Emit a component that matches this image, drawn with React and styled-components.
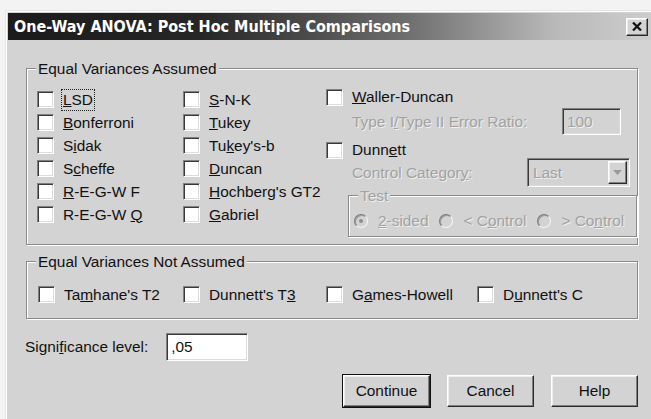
import React from "react";
import styled, { createGlobalStyle, css } from "styled-components";

const GlobalStyle = createGlobalStyle`
  html, body {
    margin: 0;
    padding: 0;
    background: #f3f3f3;
  }
  body {
    font-family: "Liberation Sans", Arial, sans-serif;
  }
`;

const FACE = "#d3d3d3";

const Page = styled.div`
  width: 651px;
  height: 419px;
  overflow: hidden;
  box-sizing: border-box;
  padding: 10px 0 0 5px;
`;

const Window = styled.div`
  height: 430px;
  box-sizing: border-box;
  background: ${FACE};
  border-left: 1px solid #e6e6e6;
  border-top: 1px solid #e6e6e6;
  box-shadow: inset 1px 1px 0 #ffffff;
  padding: 2px 0 0 2px;
  display: flex;
  flex-direction: column;
  font-size: 15.4px;
  color: #111;
`;

const TitleBar = styled.div`
  height: 27px;
  flex: none;
  display: flex;
  align-items: center;
  justify-content: space-between;
  padding: 0 3px 0 6px;
  background: linear-gradient(90deg, #1b1b1b 0%, #262626 30%, #6e6e6e 62%, #b9b9b9 85%, #cdcdcd 100%);
`;

const Title = styled.span`
  font-family: "DejaVu Sans Condensed", "DejaVu Sans", sans-serif;
  font-stretch: condensed;
  font-weight: bold;
  font-size: 16px;
  color: #ffffff;
`;

const raised = css`
  background: ${FACE};
  border-top: 1px solid #ffffff;
  border-left: 1px solid #ffffff;
  border-right: 1px solid #2a2a2a;
  border-bottom: 1px solid #2a2a2a;
  box-shadow: inset -1px -1px 0 #808080, inset 1px 1px 0 #eeeeee;
`;

const sunken = css`
  border-top: 1px solid #808080;
  border-left: 1px solid #808080;
  border-right: 1px solid #ffffff;
  border-bottom: 1px solid #ffffff;
  box-shadow: inset 1px 1px 0 #3a3a3a, inset -1px -1px 0 #dcdcdc;
`;

const CloseButton = styled.div`
  ${raised};
  box-sizing: border-box;
  width: 22px;
  height: 18px;
  display: flex;
  align-items: center;
  justify-content: center;
`;

const Body = styled.div`
  display: flex;
  flex-direction: column;
  padding: 28px 13px 0 18px;
`;

const Group = styled.div`
  border: 1px solid #8a8a8a;
  box-shadow: inset 1px 1px 0 #ffffff, 1px 1px 0 #ffffff;
  margin-top: ${(p) => p.$top || 0}px;
  margin-left: ${(p) => p.$left || 0}px;
  height: ${(p) => p.$height}px;
  box-sizing: border-box;
`;

const Legend = styled.div`
  display: table;
  height: 18px;
  line-height: 18px;
  margin-top: -9px;
  margin-left: ${(p) => p.$indent}px;
  padding: 0 2px;
  background: ${FACE};
  color: ${(p) => (p.$disabled ? "#a2a2a2" : "#111")};
  ${(p) => p.$disabled && "text-shadow: 1px 1px 0 #efefef;"}
`;

const Columns = styled.div`
  display: flex;
  margin-top: 10px;
  padding-left: 10px;
`;

const Column = styled.div`
  display: flex;
  flex-direction: column;
  width: ${(p) => (p.$width ? `${p.$width}px` : "auto")};
  flex: ${(p) => (p.$width ? "none" : "1")};
  margin-top: ${(p) => p.$shift || 0}px;
`;

const Row = styled.div`
  display: flex;
  align-items: center;
  height: ${(p) => p.$h || 23}px;
  margin-top: ${(p) => p.$mt || 0}px;
  padding-left: ${(p) => p.$indent || 0}px;
  justify-content: ${(p) => (p.$spread ? "space-between" : "flex-start")};
  gap: 9px;
  white-space: nowrap;
`;

const Box = styled.span`
  flex: none;
  width: 17px;
  height: 17px;
  box-sizing: border-box;
  background: #ffffff;
  ${sunken};
`;

const Label = styled.span`
  color: ${(p) => (p.$disabled ? "#a2a2a2" : "#111")};
  ${(p) => p.$disabled && "text-shadow: 1px 1px 0 #efefef;"}
  ${(p) =>
    p.$focused &&
    css`
      outline: 1px dotted #222;
      outline-offset: 1px;
    `}
`;

const Radio = styled.span`
  flex: none;
  width: 14px;
  height: 14px;
  box-sizing: border-box;
  border-radius: 50%;
  background: ${FACE};
  border: 1px solid;
  border-color: #7a7a7a #f6f6f6 #f6f6f6 #7a7a7a;
  box-shadow: inset 1px 1px 0 #9a9a9a;
  display: flex;
  align-items: center;
  justify-content: center;
  &::after {
    content: "";
    width: 4px;
    height: 4px;
    border-radius: 50%;
    background: ${(p) => (p.$checked ? "#8e8e8e" : "transparent")};
  }
`;

const RadioRow = styled.div`
  display: flex;
  align-items: center;
  height: 22px;
  margin-top: 5px;
  padding-left: 5px;
  white-space: nowrap;
`;

const RadioItem = styled.div`
  display: flex;
  align-items: center;
  gap: 10px;
  margin-right: 11px;
`;

const Field = styled.div`
  ${sunken};
  box-sizing: border-box;
  width: ${(p) => p.$w}px;
  height: ${(p) => p.$h}px;
  background: ${(p) => (p.$disabled ? FACE : "#ffffff")};
  color: ${(p) => (p.$disabled ? "#a2a2a2" : "#111")};
  ${(p) => p.$disabled && "text-shadow: 1px 1px 0 #efefef;"}
  display: flex;
  align-items: center;
  padding-left: 4px;
  margin-right: ${(p) => p.$mr || 0}px;
`;

const Select = styled.div`
  ${sunken};
  box-sizing: border-box;
  width: 103px;
  height: 29px;
  margin-right: 7px;
  background: ${FACE};
  display: flex;
  align-items: center;
  justify-content: space-between;
  padding: 0 2px 0 5px;
  color: #a2a2a2;
  text-shadow: 1px 1px 0 #efefef;
`;

const SelectArrow = styled.span`
  ${raised};
  box-sizing: border-box;
  width: 19px;
  height: 23px;
  display: flex;
  align-items: center;
  justify-content: center;
`;

const FooterRow = styled.div`
  display: flex;
  align-items: center;
  gap: 18px;
  margin-top: 14px;
  margin-left: -1px;
`;

const ButtonRow = styled.div`
  display: flex;
  justify-content: flex-end;
  gap: 17px;
  margin-top: 14px;
`;

const Button = styled.div`
  ${raised};
  box-sizing: border-box;
  width: 87px;
  height: 32px;
  display: flex;
  align-items: center;
  justify-content: center;
  color: #111;
  ${(p) =>
    p.$default &&
    css`
      outline: 1px solid #111;
    `}
`;

const NotAssumedRow = styled.div`
  display: grid;
  grid-template-columns: 145px 143px 151px 1fr;
  margin-top: 12px;
  padding-left: 11px;
`;

const Cell = styled.div`
  display: flex;
  align-items: center;
  gap: 9px;
  height: 23px;
  white-space: nowrap;
`;

/* Text with one mnemonic letter, marked by "&" */
function Mn({ text }) {
  const i = text.indexOf("&");
  if (i < 0) return text;
  return (
    <>
      {text.slice(0, i)}
      <u>{text[i + 1]}</u>
      {text.slice(i + 2)}
    </>
  );
}

function Check({ label, focused }) {
  return (
    <Row>
      <Box />
      <Label $focused={focused}>
        <Mn text={label} />
      </Label>
    </Row>
  );
}

const firstColumn = ["&LSD", "&Bonferroni", "S&idak", "S&cheffe", "&R-E-G-W F", "R-E-G-W &Q"];
const secondColumn = ["&S-N-K", "&Tukey", "Tu&key's-b", "&Duncan", "&Hochberg's GT2", "&Gabriel"];
const unequal = ["Ta&mhane's T2", "Dunnett's T&3", "G&ames-Howell", "D&unnett's C"];

export default function App() {
  return (
    <>
      <GlobalStyle />
      <Page>
        <Window>
          <TitleBar>
            <Title>One-Way ANOVA: Post Hoc Multiple Comparisons</Title>
            <CloseButton>
              <svg width="10" height="9" viewBox="0 0 10 9">
                <path d="M1 0.5 L9 8.5 M9 0.5 L1 8.5" stroke="#111" strokeWidth="2.2" />
              </svg>
            </CloseButton>
          </TitleBar>

          <Body>
            <Group $height={177}>
              <Legend $indent={9}>Equal Variances Assumed</Legend>
              <Columns>
                <Column $width={146}>
                  {firstColumn.map((t, i) => (
                    <Check key={t} label={t} focused={i === 0} />
                  ))}
                </Column>
                <Column $width={143}>
                  {secondColumn.map((t) => (
                    <Check key={t} label={t} />
                  ))}
                </Column>
                <Column $shift={-2}>
                  <Row $h={22}>
                    <Box />
                    <Label>
                      <Mn text="&Waller-Duncan" />
                    </Label>
                  </Row>
                  <Row $h={27} $indent={26} $spread>
                    <Label $disabled>
                      <Mn text="Type I&/Type II Error Ratio:" />
                    </Label>
                    <Field $w={59} $h={27} $mr={16} $disabled>
                      100
                    </Field>
                  </Row>
                  <Row $h={22} $mt={4}>
                    <Box />
                    <Label>
                      <Mn text="Dunn&ett" />
                    </Label>
                  </Row>
                  <Row $h={29} $mt={-3} $indent={26} $spread>
                    <Label $disabled>
                      <Mn text="Control Categor&y:" />
                    </Label>
                    <Select>
                      Last
                      <SelectArrow>
                        <svg width="9" height="5" viewBox="0 0 9 5">
                          <path d="M0 0 H9 L4.5 5 Z" fill="#9a9a9a" />
                        </svg>
                      </SelectArrow>
                    </Select>
                  </Row>
                  <Group $top={8} $left={22} $height={42}>
                    <Legend $indent={9} $disabled>
                      Test
                    </Legend>
                    <RadioRow>
                      <RadioItem>
                        <Radio $checked />
                        <Label $disabled>
                          <Mn text="&2-sided" />
                        </Label>
                      </RadioItem>
                      <RadioItem>
                        <Radio />
                        <Label $disabled>
                          <Mn text={"< C&ontrol"} />
                        </Label>
                      </RadioItem>
                      <RadioItem>
                        <Radio />
                        <Label $disabled>
                          <Mn text={"> Co&ntrol"} />
                        </Label>
                      </RadioItem>
                    </RadioRow>
                  </Group>
                </Column>
              </Columns>
            </Group>

            <Group $top={16} $height={58}>
              <Legend $indent={9}>Equal Variances Not Assumed</Legend>
              <NotAssumedRow>
                {unequal.map((t) => (
                  <Cell key={t}>
                    <Box />
                    <Label>
                      <Mn text={t} />
                    </Label>
                  </Cell>
                ))}
              </NotAssumedRow>
            </Group>

            <FooterRow>
              <Label>
                <Mn text="Signi&ficance level:" />
              </Label>
              <Field $w={82} $h={28}>
                ,05
              </Field>
            </FooterRow>

            <ButtonRow>
              <Button $default>Continue</Button>
              <Button>Cancel</Button>
              <Button>Help</Button>
            </ButtonRow>
          </Body>
        </Window>
      </Page>
    </>
  );
}
